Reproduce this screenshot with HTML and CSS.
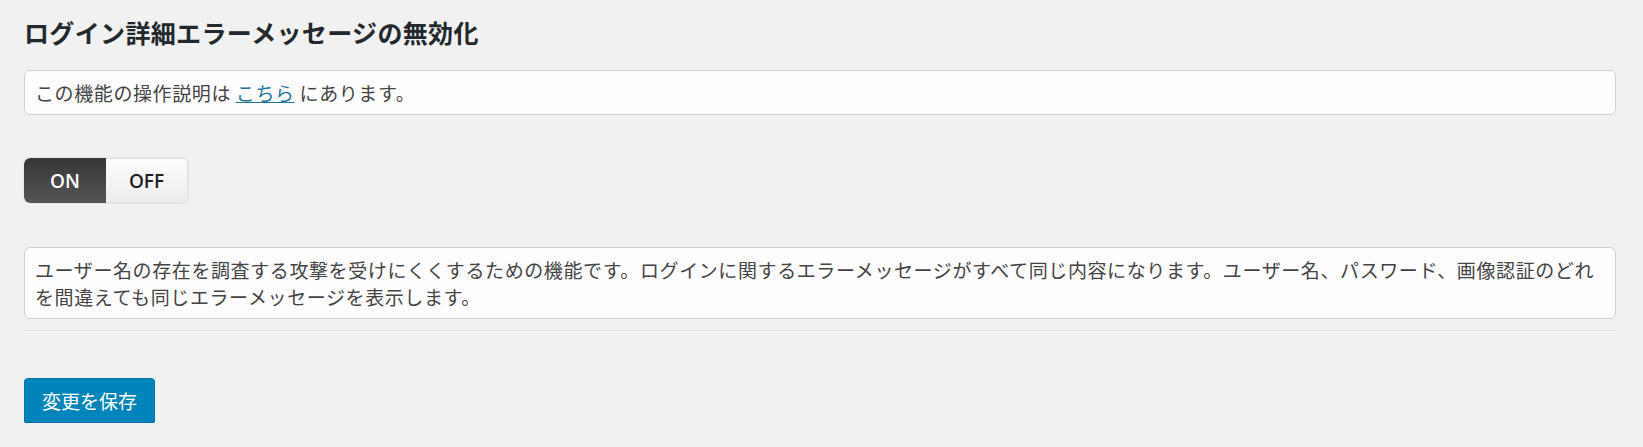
FILE: index.html
```html
<!DOCTYPE html>
<html lang="ja">
<head>
<meta charset="utf-8">
<title>ログイン詳細エラーメッセージの無効化</title>
<link rel="stylesheet" href="styles.css">
</head>
<body>
<div class="wrap">
  <h2 class="title">ログイン詳細エラーメッセージの無効化</h2>
  <div class="notice">この機能の操作説明は <a href="#" class="link">こちら</a> にあります。</div>
  <div class="toggle">
    <span class="seg seg-on">ON</span>
    <span class="seg seg-off">OFF</span>
  </div>
  <div class="notice desc">ユーザー名の存在を調査する攻撃を受けにくくするための機能です。ログインに関するエラーメッセージがすべて同じ内容になります。ユーザー名、パスワード、画像認証のどれを間違えても同じエラーメッセージを表示します。</div>
  <hr class="sep">
  <button class="btn-primary" type="button">変更を保存</button>
</div>
</body>
</html>
```

FILE: styles.css
```css
html, body {
  margin: 0;
  padding: 0;
  background: #f1f1f1;
}
body {
  font-family: "Noto Sans CJK JP", "Noto Sans", sans-serif;
  color: #444;
  font-size: 19px;
}
.wrap {
  width: 1592px;
  padding: 16px 0 0 24px;
  display: flex;
  flex-direction: column;
  align-items: flex-start;
}
.title {
  margin: 0;
  font-size: 25px;
  line-height: 32px;
  font-weight: 700;
  color: #23282d;
  letter-spacing: 0.35px;
}
.notice {
  box-sizing: border-box;
  width: 1592px;
  margin-top: 22px;
  background: #fdfdfd;
  border: 1px solid #cfcfcf;
  border-radius: 6px;
  padding: 8px 10px 8px 10px;
  line-height: 27px;
  letter-spacing: 0.6px;
}
.link {
  color: #21759b;
  text-decoration: underline;
}
.toggle {
  margin-top: 43px;
  display: flex;
  height: 45px;
  border-radius: 6px;
  box-shadow: 0 0 0 1px #e6e6e6;
  overflow: hidden;
  font-family: "Open Sans", "Noto Sans", sans-serif;
  font-weight: 600;
  font-size: 19px;
}
.seg {
  display: flex;
  align-items: center;
  justify-content: center;
  box-sizing: border-box;
}
.seg-on {
  width: 82px;
  color: #fff;
  background: linear-gradient(#363636, #555);
  border-radius: 6px 0 0 6px;
}
.seg-off {
  width: 82px;
  color: #1e1e1e;
  background: linear-gradient(#fdfdfd, #ececec);
  border: 1px solid #e2e2e2;
  border-left: 0;
  border-radius: 0 6px 6px 0;
}
.desc {
  margin-top: 44px;
}
.sep {
  width: 1592px;
  margin: 11px 0 0 0;
  border: 0;
  border-top: 1px solid #dddddd;
  border-bottom: 1px solid #fafafa;
  height: 0;
}
.btn-primary {
  margin-top: 46px;
  height: 45px;
  padding: 0 17px;
  border: 1px solid #0073aa;
  border-radius: 4px;
  background: #0085ba;
  color: #fff;
  font-family: "Noto Sans CJK JP", sans-serif;
  font-size: 19px;
  line-height: 43px;
  box-shadow: 0 1px 0 #006799;
}
```
